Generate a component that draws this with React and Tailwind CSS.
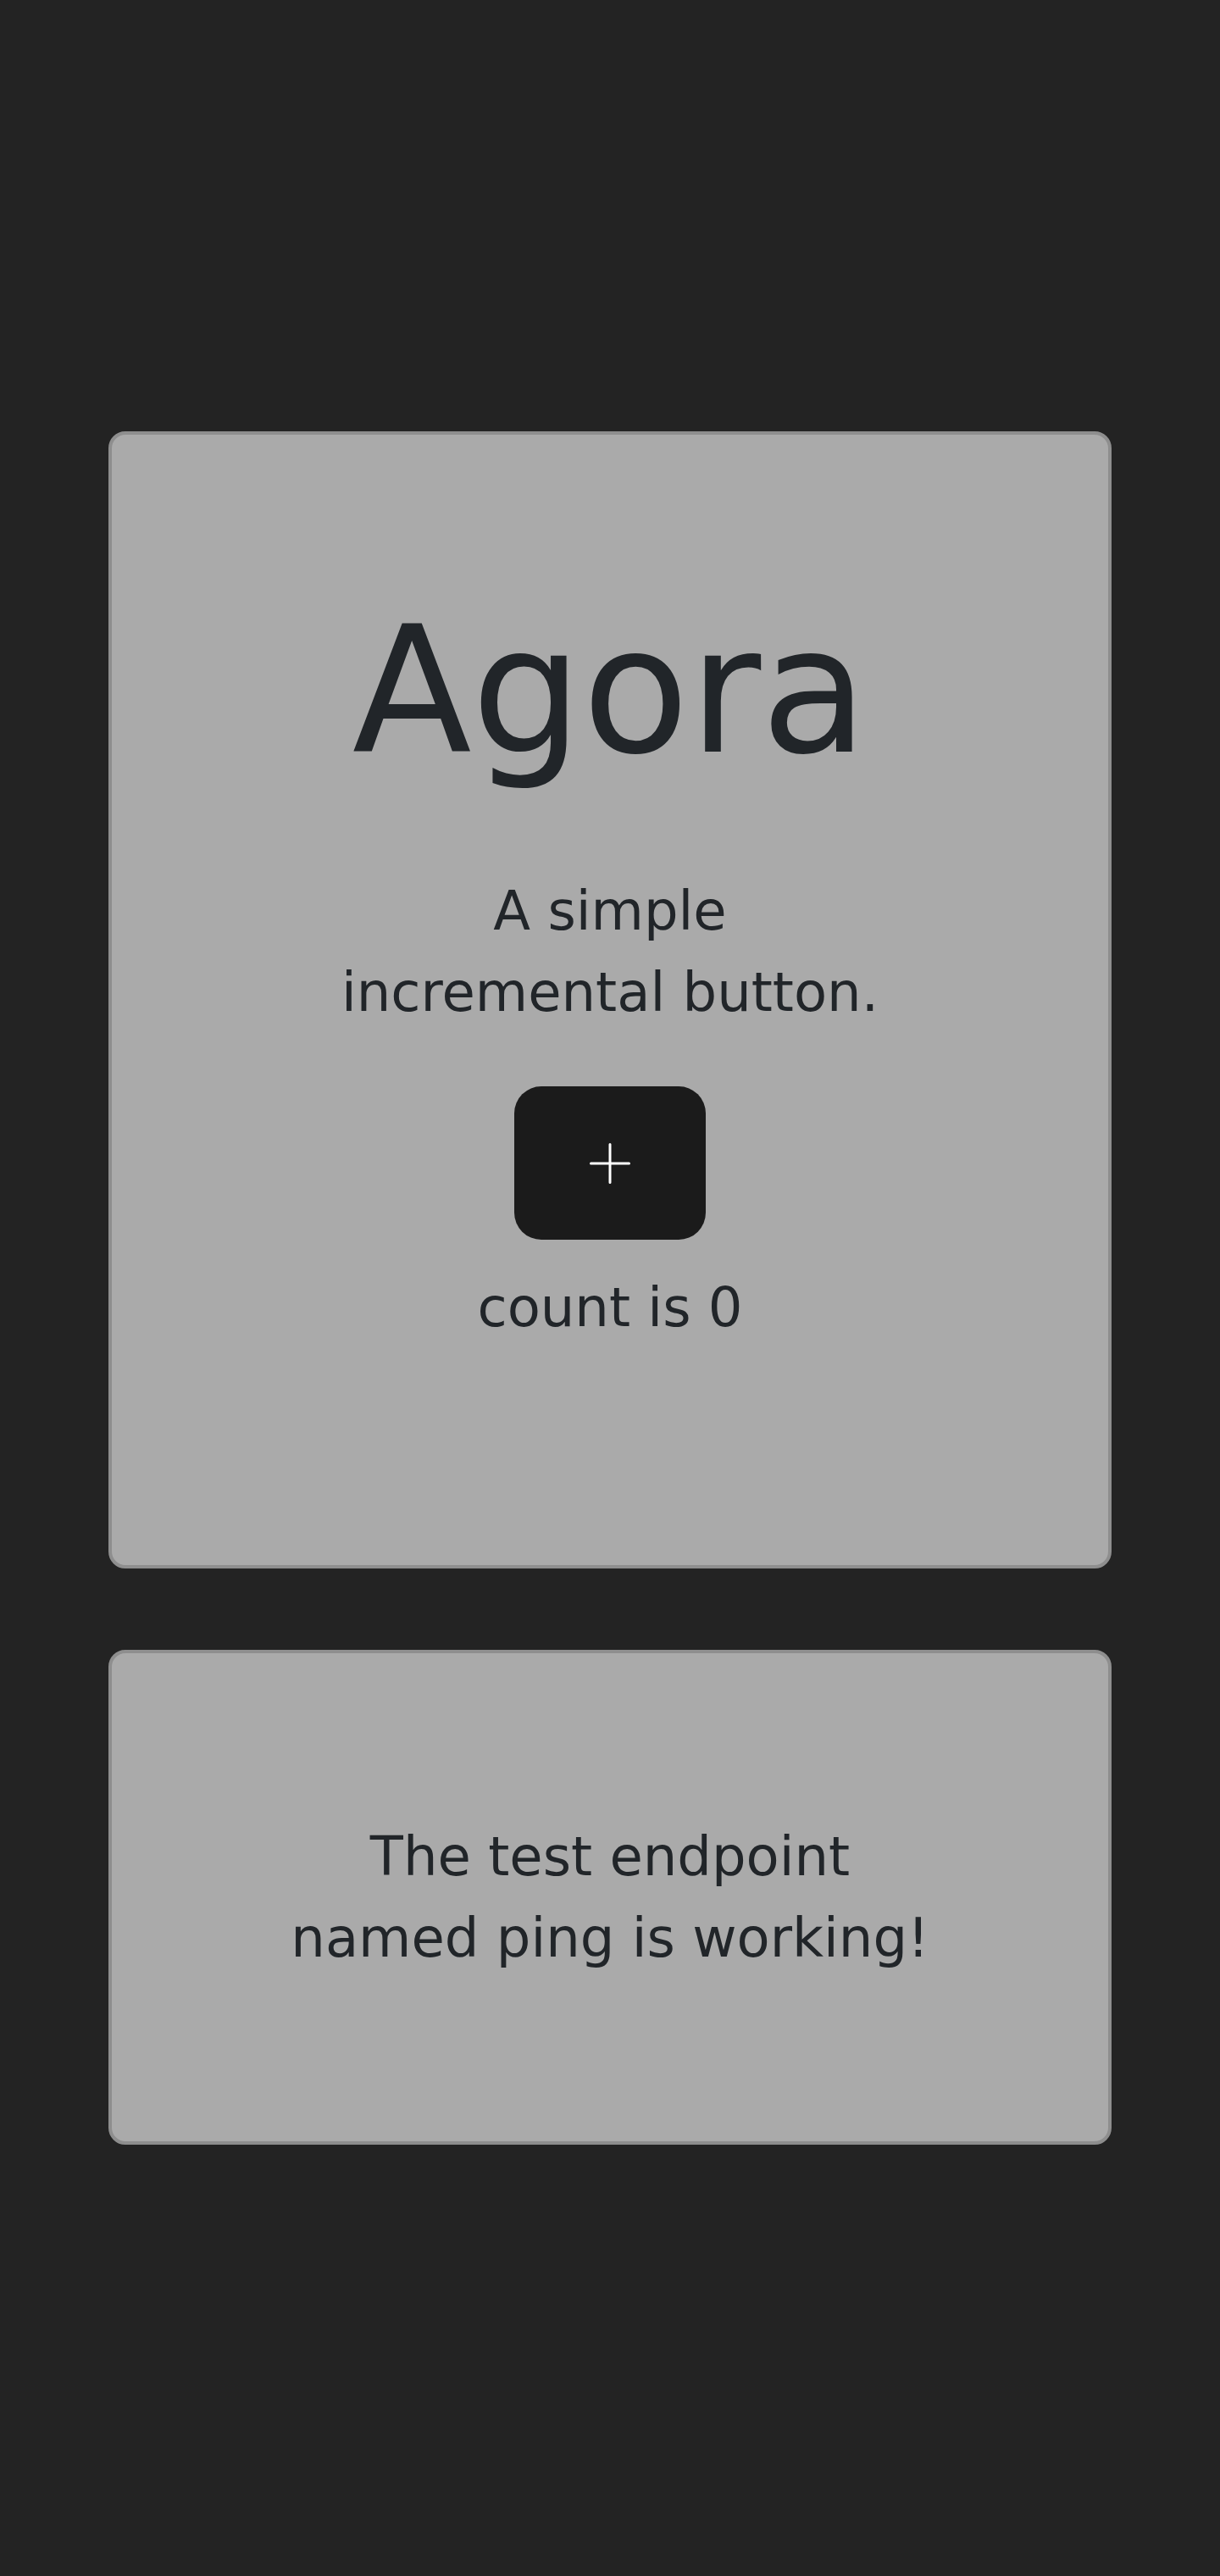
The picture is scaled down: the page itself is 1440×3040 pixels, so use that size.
import { useState } from "react";

const Card = ({ className, children }) => (
  <div
    className={`rounded-[20px] border-4 border-[#8e8e8e] bg-[#aaaaaa] ${className}`}
  >
    {children}
  </div>
);

const App = () => {
  const [count, setCount] = useState(0);

  return (
    <div className="min-h-[3040px] bg-[#232323] px-[128px] pt-[509px] font-['DejaVu_Sans',sans-serif] text-[#212529]">
      {/* Counter card */}
      <Card className="flex flex-col items-center pt-[180px] pb-[256px] text-center">
        <h1 className="text-[206px] leading-[1.2] font-normal">Agora</h1>
        <p className="mt-[87px] max-w-[660px] text-[64px] leading-[96px]">
          A simple incremental button.
        </p>
        <button
          onClick={() => setCount((c) => c + 1)}
          className="mt-[63px] flex h-[181px] w-[226px] items-center justify-center rounded-[32px] bg-[#1b1b1b]"
        >
          <svg
            width="48"
            height="48"
            viewBox="0 0 48 48"
            fill="none"
            stroke="#ffffff"
            strokeWidth="3"
            strokeLinecap="round"
          >
            <path d="M24 1.5v45M1.5 24h45" />
          </svg>
        </button>
        <p className="mt-[32px] text-[64px] leading-[96px]">count is {count}</p>
      </Card>

      {/* Ping card */}
      <Card className="mt-[96px] flex justify-center py-[192px] text-center">
        <p className="max-w-[780px] text-[64px] leading-[96px]">
          The test endpoint named ping is working!
        </p>
      </Card>
    </div>
  );
};

export default App;
